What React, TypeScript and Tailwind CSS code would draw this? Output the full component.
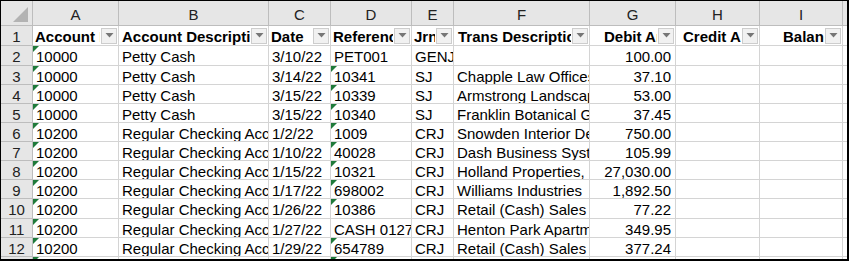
import React from "react";

const COLS = ["A", "B", "C", "D", "E", "F", "G", "H", "I"];
const HEADERS = [
  { t: "Account ID", pl: "pl-[2px]" },
  { t: "Account Description", pl: "pl-[3px]" },
  { t: "Date", pl: "pl-[2px]" },
  { t: "Reference", pl: "pl-[2px]" },
  { t: "Jrnl", pl: "pl-[2px]" },
  { t: "Trans Description", pl: "pl-[4px]" },
  { t: "Debit Amount", pl: "pl-[14px]" },
  { t: "Credit Amount", pl: "pl-[7px]" },
  { t: "Balance", pl: "pl-[23px]" },
];

type Row = [string, string, string, string, string, string, string, boolean];
const ROWS: Row[] = [
  ["10000", "Petty Cash", "3/10/22", "PET001", "GENJ", "", "100.00", false],
  ["10000", "Petty Cash", "3/14/22", "10341", "SJ", "Chapple Law Offices", "37.10", true],
  ["10000", "Petty Cash", "3/15/22", "10339", "SJ", "Armstrong Landscaping", "53.00", true],
  ["10000", "Petty Cash", "3/15/22", "10340", "SJ", "Franklin Botanical Gardens", "37.45", true],
  ["10200", "Regular Checking Account", "1/2/22", "1009", "CRJ", "Snowden Interior Design", "750.00", true],
  ["10200", "Regular Checking Account", "1/10/22", "40028", "CRJ", "Dash Business Systems", "105.99", true],
  ["10200", "Regular Checking Account", "1/15/22", "10321", "CRJ", "Holland Properties, Inc.", "27,030.00", true],
  ["10200", "Regular Checking Account", "1/17/22", "698002", "CRJ", "Williams Industries", "1,892.50", true],
  ["10200", "Regular Checking Account", "1/26/22", "10386", "CRJ", "Retail (Cash) Sales", "77.22", true],
  ["10200", "Regular Checking Account", "1/27/22", "CASH 01272", "CRJ", "Henton Park Apartments", "349.95", false],
  ["10200", "Regular Checking Account", "1/29/22", "654789", "CRJ", "Retail (Cash) Sales", "377.24", true],
];

const HEIGHTS = ["h-[20px]", "h-[19px]", "h-[19px]", "h-[19px]", "h-[19px]", "h-[19px]", "h-[19px]", "h-[19px]", "h-[20px]", "h-[19px]", "h-[19px]"];

const GRID =
  "grid grid-cols-[32px_86px_150px_62px_81px_42px_136px_86px_84px_83px_1fr]";

function Flag() {
  return (
    <svg className="absolute left-0 top-0" width="6" height="6" viewBox="0 0 6 6">
      <polygon points="0,0 6,0 0,6" fill="#1f7a3a" />
    </svg>
  );
}

function DropBtn() {
  return (
    <div className="ml-[1px] mr-[1px] flex h-[16px] w-[16px] shrink-0 items-center justify-center border border-[#cdcdcd] bg-[#f1f1f1]">
      <svg width="9" height="5" viewBox="0 0 9 5">
        <polygon points="0.5,0 8.5,0 4.5,4.5" fill="#767676" />
      </svg>
    </div>
  );
}

function RowNum({ n, h }: { n: string; h: string }) {
  return (
    <div
      className={`${h} flex items-start justify-center border-b border-r border-[#bdbdbd] bg-[#e6e6e6] pt-[2px] text-[15px] leading-[17px] text-[#222]`}
    >
      {n}
    </div>
  );
}

function Cell({
  h,
  text,
  right,
  flag,
}: {
  h: string;
  text: string;
  right?: boolean;
  flag?: boolean;
}) {
  return (
    <div
      className={`${h} relative flex min-w-0 items-start overflow-hidden whitespace-nowrap border-b border-r border-[#d4d4d4] pt-[2px] leading-[17px] ${
        right ? "justify-end pr-[4px]" : "pl-[3px]"
      }`}
    >
      {flag && <Flag />}
      {text && <span className="shrink-0">{text}</span>}
    </div>
  );
}

export default function App() {
  return (
    <div
      className="h-[261px] w-[849px] overflow-hidden border-b-2 border-l border-r-2 border-t border-black bg-white text-[15px] text-black"
      style={{ fontFamily: '"Liberation Sans", Arial, sans-serif' }}
    >
      <div className={GRID}>
        <div className="relative h-[25px] border-b border-r border-[#bdbdbd] bg-[#e6e6e6]">
          <svg className="absolute left-0 top-0" width="31" height="24" viewBox="0 0 31 24">
            <polygon points="12,21 27,21 27,6" fill="#b3b3b3" />
          </svg>
        </div>
        {COLS.map((c) => (
          <div
            key={c}
            className="flex h-[25px] items-start justify-center border-b border-r border-[#bdbdbd] bg-[#e6e6e6] pt-[5px] text-[15px] leading-[17px] text-[#222]"
          >
            {c}
          </div>
        ))}
        <div className="h-[25px] border-b border-[#bdbdbd] bg-[#e6e6e6]" />

        <RowNum n="1" h="h-[20px]" />
        {HEADERS.map((hd) => (
          <div
            key={hd.t}
            className="flex h-[20px] min-w-0 items-center border-b border-r border-[#d4d4d4] font-bold leading-[17px]"
          >
            <div className={`min-w-0 flex-1 overflow-hidden whitespace-nowrap pt-[1px] ${hd.pl}`}>{hd.t}</div>
            <DropBtn />
          </div>
        ))}
        <div className="h-[20px] border-b border-[#d4d4d4]" />

        {ROWS.map((r, i) => {
          const h = HEIGHTS[i];
          return (
            <React.Fragment key={i}>
              <RowNum n={String(i + 2)} h={h} />
              <Cell h={h} text={r[0]} flag />
              <Cell h={h} text={r[1]} />
              <Cell h={h} text={r[2]} />
              <Cell h={h} text={r[3]} flag={r[7]} />
              <Cell h={h} text={r[4]} />
              <Cell h={h} text={r[5]} />
              <Cell h={h} text={r[6]} right />
              <Cell h={h} text="" />
              <Cell h={h} text="" />
              <div className={`${h} border-b border-[#d4d4d4]`} />
            </React.Fragment>
          );
        })}

        <RowNum n="13" h="h-[19px]" />
        <Cell h="h-[19px]" text="" flag />
        <Cell h="h-[19px]" text="" />
        <Cell h="h-[19px]" text="" />
        <Cell h="h-[19px]" text="" flag />
        <Cell h="h-[19px]" text="" />
        <Cell h="h-[19px]" text="" />
        <Cell h="h-[19px]" text="" />
        <Cell h="h-[19px]" text="" />
        <Cell h="h-[19px]" text="" />
        <div className="h-[19px]" />
      </div>
    </div>
  );
}
